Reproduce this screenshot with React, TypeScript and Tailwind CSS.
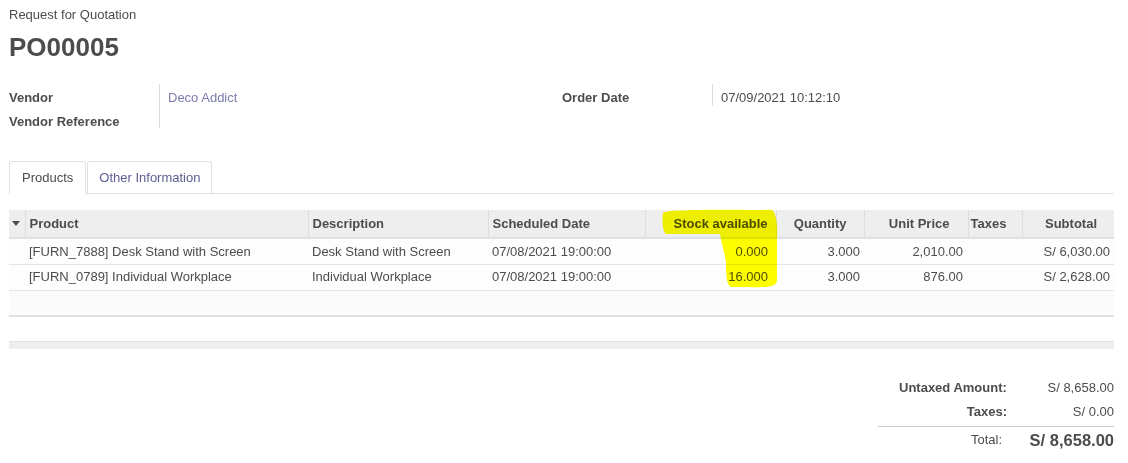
import React from "react";

const lines = [
  {
    product: "[FURN_7888] Desk Stand with Screen",
    description: "Desk Stand with Screen",
    date: "07/08/2021 19:00:00",
    stock: "0.000",
    qty: "3.000",
    price: "2,010.00",
    subtotal: "S/ 6,030.00",
  },
  {
    product: "[FURN_0789] Individual Workplace",
    description: "Individual Workplace",
    date: "07/08/2021 19:00:00",
    stock: "16.000",
    qty: "3.000",
    price: "876.00",
    subtotal: "S/ 2,628.00",
  },
];

// hand-drawn marker stroke over the "Stock available" column
function Highlighter() {
  return (
    <svg
      className="absolute left-0 top-0 pointer-events-none mix-blend-multiply"
      width="1128"
      height="463"
    >
      <path
        d="M663 213 C663 210 700 209 772 210 C776 212 778 226 777 238 L777 280 C777 286 770 288 750 287 L731 287 C726 285 726 272 726 262 C724 250 721 242 720 234 L666 234 C662 230 662 220 663 213 Z"
        fill="#ffff00"
      />
    </svg>
  );
}

function App() {
  return (
    <div className="relative w-[1128px] h-[463px] bg-white text-[13px] text-[#4c4c4c] font-['Liberation_Sans',Arial,sans-serif] pl-[9px] pr-[14px] overflow-hidden">
      <div className="pt-[6px] leading-[18px]">Request for Quotation</div>
      <h1 className="text-[26px] font-bold leading-[32px] mt-[7px] text-[#4c4c4c]">PO00005</h1>

      <div className="flex mt-[23px]">
        <div className="flex w-[553px]">
          <div className="w-[150px] font-bold leading-[24px]">
            <div>Vendor</div>
            <div>Vendor Reference</div>
          </div>
          <div className="border-l border-[#dcdcdc] pl-[8px] text-[#7c7bad] leading-[24px] h-[44px] -mt-[2px] pt-[2px]">
            Deco Addict
          </div>
        </div>
        <div className="flex">
          <div className="w-[150px] font-bold leading-[24px]">Order Date</div>
          <div className="border-l border-[#dcdcdc] pl-[8px] leading-[24px] h-[22px] -mt-[2px] pt-[2px]">
            07/09/2021 10:12:10
          </div>
        </div>
      </div>

      <div className="flex mt-[27px] border-b border-[#dee2e6] h-[33px]">
        <div className="h-[34px] px-[12px] border border-[#dee2e6] border-b-white bg-white rounded-t-[3px] leading-[32px]">
          Products
        </div>
        <div className="h-[33px] px-[11px] ml-px border border-[#dee2e6] border-b-0 rounded-t-[3px] leading-[32px] text-[#5d5c93]">
          Other Information
        </div>
      </div>

      <table className="mt-[16px] w-[1105px] table-fixed border-collapse">
        <colgroup>
          <col className="w-[16px]" />
          <col className="w-[283px]" />
          <col className="w-[180px]" />
          <col className="w-[157px]" />
          <col className="w-[131px]" />
          <col className="w-[88px]" />
          <col className="w-[104px]" />
          <col className="w-[54px]" />
          <col className="w-[92px]" />
        </colgroup>
        <thead>
          <tr className="bg-[#eeeeee] h-[28px] border-b-2 border-[#dee2e6] font-bold text-left">
            <th className="pl-[3px] border-r border-[#dddddd]">
              <span className="inline-block w-0 h-0 border-l-[4px] border-r-[4px] border-t-[5px] border-l-transparent border-r-transparent border-t-[#4c4c4c] align-middle mb-[2px]" />
            </th>
            <th className="px-[4px] border-r border-[#dddddd]">Product</th>
            <th className="px-[4px] border-r border-[#dddddd]">Description</th>
            <th className="px-[4px] border-r border-[#dddddd]">Scheduled Date</th>
            <th className="pr-[8px] text-right border-r border-[#dddddd]">Stock available</th>
            <th className="pr-[17px] text-right border-r border-[#dddddd]">Quantity</th>
            <th className="pr-[18px] text-right border-r border-[#dddddd]">Unit Price</th>
            <th className="px-[2px] border-r border-[#dddddd]">Taxes</th>
            <th className="pr-[17px] text-right">Subtotal</th>
          </tr>
        </thead>
        <tbody>
          {lines.map((l) => (
            <tr key={l.product} className="h-[26px] border-b border-[#e4e4e4] bg-[#fdfdfd]">
              <td />
              <td className="px-[4px] whitespace-nowrap">{l.product}</td>
              <td className="px-[4px] whitespace-nowrap">{l.description}</td>
              <td className="px-[4px] whitespace-nowrap">{l.date}</td>
              <td className="pr-[8px] text-right">{l.stock}</td>
              <td className="pr-[4px] text-right">{l.qty}</td>
              <td className="pr-[5px] text-right">{l.price}</td>
              <td />
              <td className="pr-[4px] text-right whitespace-nowrap">{l.subtotal}</td>
            </tr>
          ))}
          <tr className="h-[26px] border-b-2 border-[#dee2e6] bg-[#fbfbfb]">
            <td colSpan={9} />
          </tr>
        </tbody>
        <tfoot>
          <tr className="h-[25px]">
            <td colSpan={9} />
          </tr>
          <tr className="h-[8px] bg-[#eeeeee] border-t border-[#e2e2e2]">
            <td colSpan={9} />
          </tr>
        </tfoot>
      </table>

      <div className="flex justify-end mt-[27px]">
        <div className="w-[236px]">
          <div className="flex justify-between leading-[24px] pl-[21px]">
            <span className="font-bold">Untaxed Amount:</span>
            <span>S/ 8,658.00</span>
          </div>
          <div className="flex leading-[24px]">
            <span className="font-bold w-[129px] text-right">Taxes:</span>
            <span className="flex-1 text-right">S/ 0.00</span>
          </div>
          <div className="border-t border-[#cccccc] mt-[2px] flex items-center leading-[24px] pt-[1px]">
            <span className="w-[124px] text-right">Total:</span>
            <span className="flex-1 text-right font-bold text-[16.5px]">S/ 8,658.00</span>
          </div>
        </div>
      </div>

      <Highlighter />
    </div>
  );
}

export default App;
